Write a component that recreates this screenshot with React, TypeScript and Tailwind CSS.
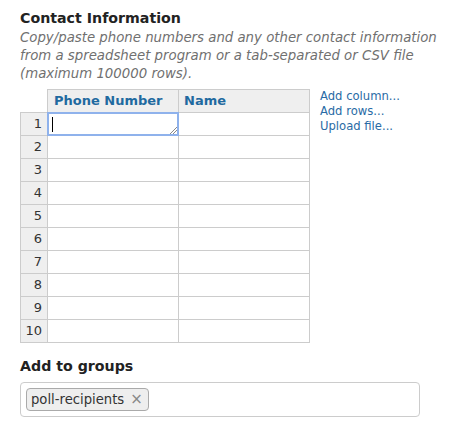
import React from "react";

const rows = [1, 2, 3, 4, 5, 6, 7, 8, 9, 10];

export default function App() {
  const font = { fontFamily: '"DejaVu Sans", Verdana, sans-serif' };
  return (
    <div className="w-[452px] h-[423px] bg-white pl-[20px] pt-[8px] text-[#333]" style={font}>
      <h2 className="text-[14.2px] leading-[20px] font-bold text-[#222]">Contact Information</h2>
      <p className="mt-[1px] text-[13.3px] leading-[18px] italic text-[#707070] w-[425px]">
        Copy/paste phone numbers and any other contact information from a spreadsheet program or a tab-separated or CSV file (maximum 100000 rows).
      </p>
      <div className="mt-[6px] flex gap-[10px]">
        <div className="grid grid-cols-[28px_131px_131px] w-[290px]">
          <div className="h-[24px] border-r border-b border-[#ccc]" />
          <div className="h-[24px] border-t border-r border-b border-[#ccc] bg-[#efefef] pl-[6px] text-[13px] leading-[22px] font-bold text-[#1f6aa0]">
            Phone Number
          </div>
          <div className="h-[24px] border-t border-r border-b border-[#ccc] bg-[#efefef] pl-[5px] text-[13px] leading-[22px] font-bold text-[#1f6aa0]">
            Name
          </div>
          {rows.map((r) => (
            <React.Fragment key={r}>
              <div className="h-[23px] border-l border-r border-b border-[#ccc] bg-[#efefef] pr-[5px] text-right text-[13px] leading-[22px] text-[#333]">
                {r}
              </div>
              <div className="relative h-[23px] border-r border-b border-[#ccc]">
                {r === 1 && (
                  <div className="absolute left-[-1px] top-[-1px] w-[132px] h-[24px] border-2 border-[#8fb2ec]">
                    <div className="absolute left-[3px] top-[3px] w-[1px] h-[15px] bg-black" />
                    <svg className="absolute right-0 bottom-0" width="8" height="8" viewBox="0 0 8 8">
                      <line x1="1" y1="8" x2="8" y2="1" stroke="#888" strokeWidth="1" />
                      <line x1="4" y1="8" x2="8" y2="4" stroke="#888" strokeWidth="1" />
                    </svg>
                  </div>
                )}
              </div>
              <div className="h-[23px] border-r border-b border-[#ccc]" />
            </React.Fragment>
          ))}
        </div>
        <div className="flex flex-col text-[11.6px] leading-[15px] text-[#2a6ba5]">
          <a>Add column...</a>
          <a>Add rows...</a>
          <a>Upload file...</a>
        </div>
      </div>
      <h3 className="mt-[13px] text-[14.2px] leading-[20px] font-bold text-[#222]">Add to groups</h3>
      <div className="mt-[6px] w-[400px] h-[35px] border border-[#ccc] rounded-[4px] flex items-center pl-[5px]">
        <span className="h-[23px] flex items-center gap-[6px] pl-[4px] pr-[5px] bg-[#eee] border border-[#aaa] rounded-[4px] text-[13.2px] text-[#333]">
          poll-recipients
          <span className="text-[#888] text-[15px]">×</span>
        </span>
      </div>
    </div>
  );
}
